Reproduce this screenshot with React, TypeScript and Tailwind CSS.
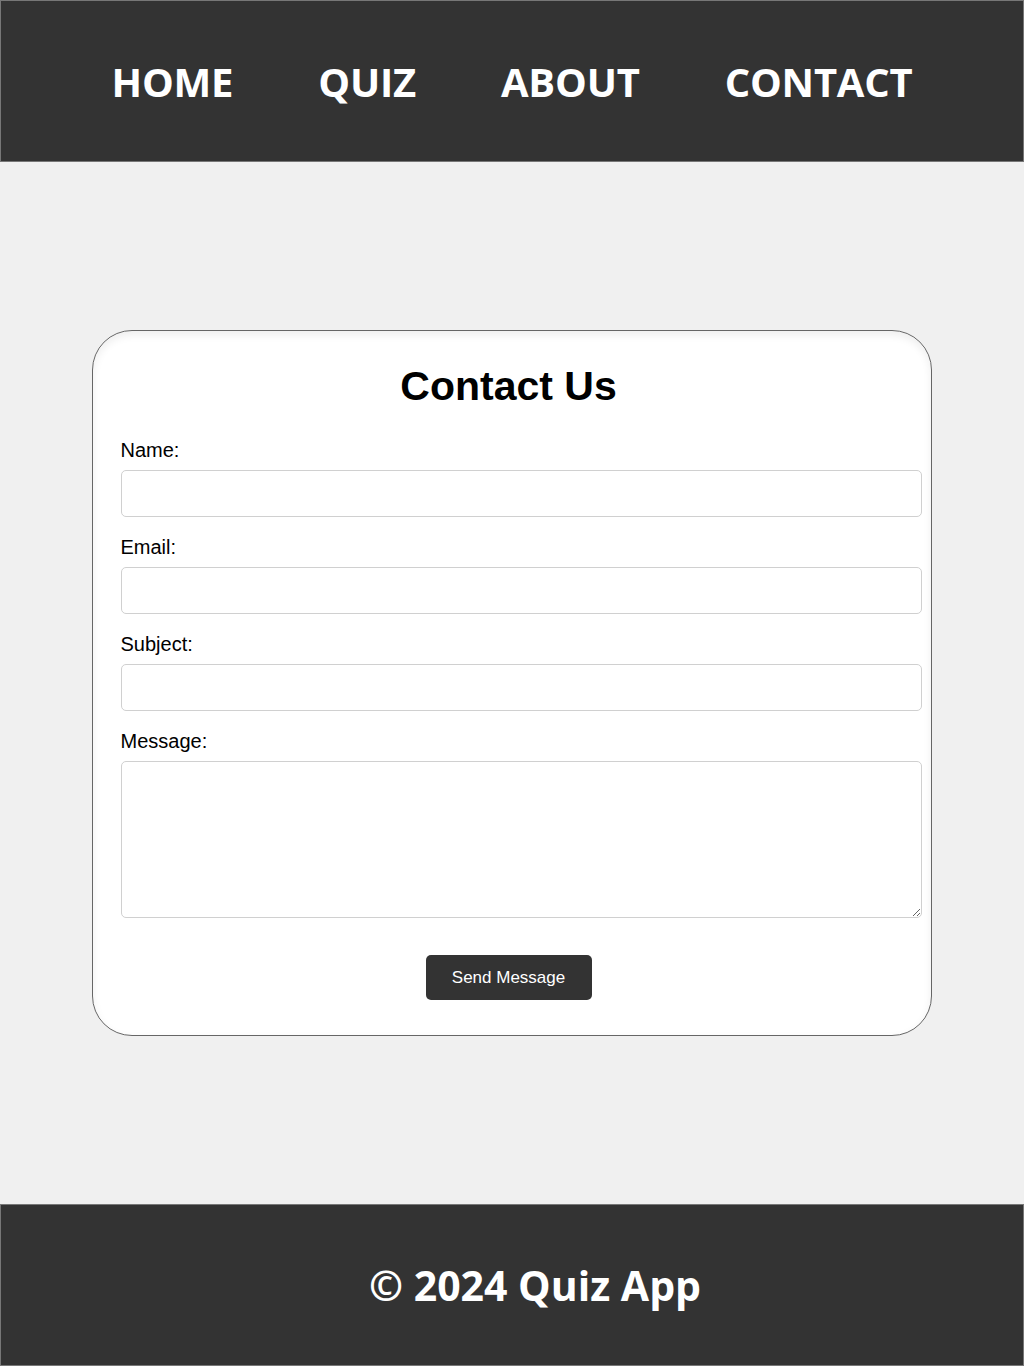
import React from "react";

const navItems = ["HOME", "QUIZ", "ABOUT", "CONTACT"];

const fields = [
  { id: "name", label: "Name:", type: "text" },
  { id: "email", label: "Email:", type: "email" },
  { id: "subject", label: "Subject:", type: "text" },
];

export default function App() {
  return (
    <div className="flex min-h-[1366px] flex-col bg-[#f0f0f0] font-['Liberation_Sans',Arial,sans-serif]">
      {/* header nav */}
      <header className="flex h-[162px] items-center justify-center border border-[#777] bg-[#333] pt-[2px]">
        <nav className="flex items-center gap-[85px]">
          {navItems.map((item) => (
            <a
              key={item}
              href="#"
              className="font-['Open_Sans',sans-serif] text-[40px] font-bold tracking-[-0.2px] text-white"
            >
              {item}
            </a>
          ))}
        </nav>
      </header>

      {/* contact card */}
      <main className="flex flex-1 items-center justify-center">
        <div className="ml-[-1px] w-[840px] rounded-[40px] border border-[#666] bg-white pt-[32px] pb-[35px] pr-[34px] pl-[28px] shadow-[inset_0_4px_8px_rgba(0,0,0,0.07)]">
          <h2 className="mb-[30px] text-center text-[41px] leading-[46px] font-bold text-black">Contact Us</h2>
          <form onSubmit={(e) => e.preventDefault()}>
            {fields.map((f) => (
              <div key={f.id}>
                <label htmlFor={f.id} className="mb-[8px] block text-[20px] leading-[23px] text-black">
                  {f.label}
                </label>
                <input
                  id={f.id}
                  type={f.type}
                  className="mb-[19px] block h-[47px] w-[801px] rounded-[5px] border border-[#d0d0d0] bg-white px-[10px] outline-none"
                />
              </div>
            ))}
            <label htmlFor="message" className="mb-[8px] block text-[20px] leading-[23px] text-black">
              Message:
            </label>
            <textarea
              id="message"
              className="mb-[37px] block h-[157px] w-[801px] rounded-[5px] border border-[#d0d0d0] bg-white p-[10px] outline-none"
            />
            <div className="flex justify-center">
              <button
                type="submit"
                className="h-[45px] w-[166px] rounded-[5px] bg-[#333] text-[17px] text-white"
              >
                Send Message
              </button>
            </div>
          </form>
        </div>
      </main>

      {/* footer */}
      <footer className="flex h-[162px] items-center justify-center border border-[#777] bg-[#333] pl-[46px] pt-[2px]">
        <p className="font-['Open_Sans',sans-serif] text-[41px] font-bold text-white">© 2024 Quiz App</p>
      </footer>
    </div>
  );
}
